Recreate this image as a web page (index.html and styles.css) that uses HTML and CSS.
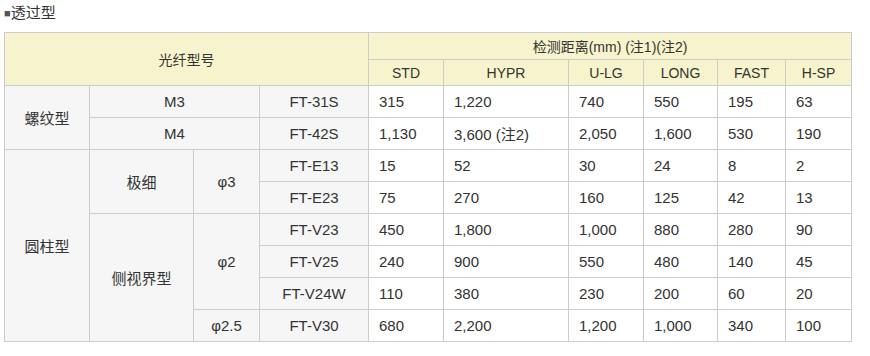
FILE: index.html
```html
<!DOCTYPE html>
<html lang="zh-CN">
<head>
<meta charset="utf-8">
<title>透过型</title>
<link rel="stylesheet" href="styles.css">
</head>
<body>
<div class="page">
  <h3 class="title"><span class="sq">■</span>透过型</h3>
  <table class="spec">
    <colgroup>
      <col class="c1"><col class="c2"><col class="c3"><col class="c4">
      <col class="c5"><col class="c6"><col class="c7"><col class="c8"><col class="c9"><col class="c10">
    </colgroup>
    <thead>
      <tr class="hr1">
        <th colspan="4" rowspan="2">光纤型号</th>
        <th colspan="6">检测距离(mm) (注1)(注2)</th>
      </tr>
      <tr class="hr2">
        <th>STD</th><th>HYPR</th><th>U-LG</th><th>LONG</th><th>FAST</th><th>H-SP</th>
      </tr>
    </thead>
    <tbody>
      <tr>
        <td class="g" rowspan="2">螺纹型</td>
        <td class="g" colspan="2">M3</td>
        <td class="g">FT-31S</td>
        <td>315</td><td>1,220</td><td>740</td><td>550</td><td>195</td><td>63</td>
      </tr>
      <tr>
        <td class="g" colspan="2">M4</td>
        <td class="g">FT-42S</td>
        <td>1,130</td><td>3,600 (注2)</td><td>2,050</td><td>1,600</td><td>530</td><td>190</td>
      </tr>
      <tr>
        <td class="g" rowspan="6">圆柱型</td>
        <td class="g" rowspan="2">极细</td>
        <td class="g" rowspan="2">φ3</td>
        <td class="g">FT-E13</td>
        <td>15</td><td>52</td><td>30</td><td>24</td><td>8</td><td>2</td>
      </tr>
      <tr>
        <td class="g">FT-E23</td>
        <td>75</td><td>270</td><td>160</td><td>125</td><td>42</td><td>13</td>
      </tr>
      <tr>
        <td class="g" rowspan="4">侧视界型</td>
        <td class="g" rowspan="3">φ2</td>
        <td class="g">FT-V23</td>
        <td>450</td><td>1,800</td><td>1,000</td><td>880</td><td>280</td><td>90</td>
      </tr>
      <tr>
        <td class="g">FT-V25</td>
        <td>240</td><td>900</td><td>550</td><td>480</td><td>140</td><td>45</td>
      </tr>
      <tr>
        <td class="g">FT-V24W</td>
        <td>110</td><td>380</td><td>230</td><td>200</td><td>60</td><td>20</td>
      </tr>
      <tr>
        <td class="g">φ2.5</td>
        <td class="g">FT-V30</td>
        <td>680</td><td>2,200</td><td>1,200</td><td>1,000</td><td>340</td><td>100</td>
      </tr>
    </tbody>
  </table>
</div>
</body>
</html>
```

FILE: styles.css
```css
html, body {
  margin: 0;
  padding: 0;
  background: #fff;
}
body {
  font-family: "Liberation Sans", Arial, "Noto Sans CJK SC", sans-serif;
  color: #333;
}
.page {
  padding: 0 4px;
}
.title {
  margin: 0 0 6px 0;
  height: 26px;
  line-height: 26px;
  font-size: 15px;
  font-weight: normal;
  color: #333;
}
.sq {
  color: #555;
  font-size: 11px;
  vertical-align: 1px;
}
.spec {
  border-collapse: collapse;
  table-layout: fixed;
  width: 847px;
}
.c1 { width: 85px; }
.c2 { width: 104px; }
.c3 { width: 66px; }
.c4 { width: 109px; }
.c5 { width: 75px; }
.c6 { width: 125px; }
.c7 { width: 75px; }
.c8 { width: 74px; }
.c9 { width: 68px; }
.c10 { width: 66px; }
.spec th, .spec td {
  border: 1px solid #ccc;
  padding: 0;
}
.spec th {
  background: #f7f3cc;
  font-weight: normal;
  font-size: 14px;
  text-align: center;
}
.hr1 { height: 27px; }
.hr2 { height: 26px; }
.spec tbody tr { height: 32px; }
.spec td {
  font-size: 15px;
  text-align: left;
  padding-left: 10px;
  background: #fff;
}
.spec td.g {
  background: #f6f6f6;
  text-align: center;
  padding-left: 0;
}
```
